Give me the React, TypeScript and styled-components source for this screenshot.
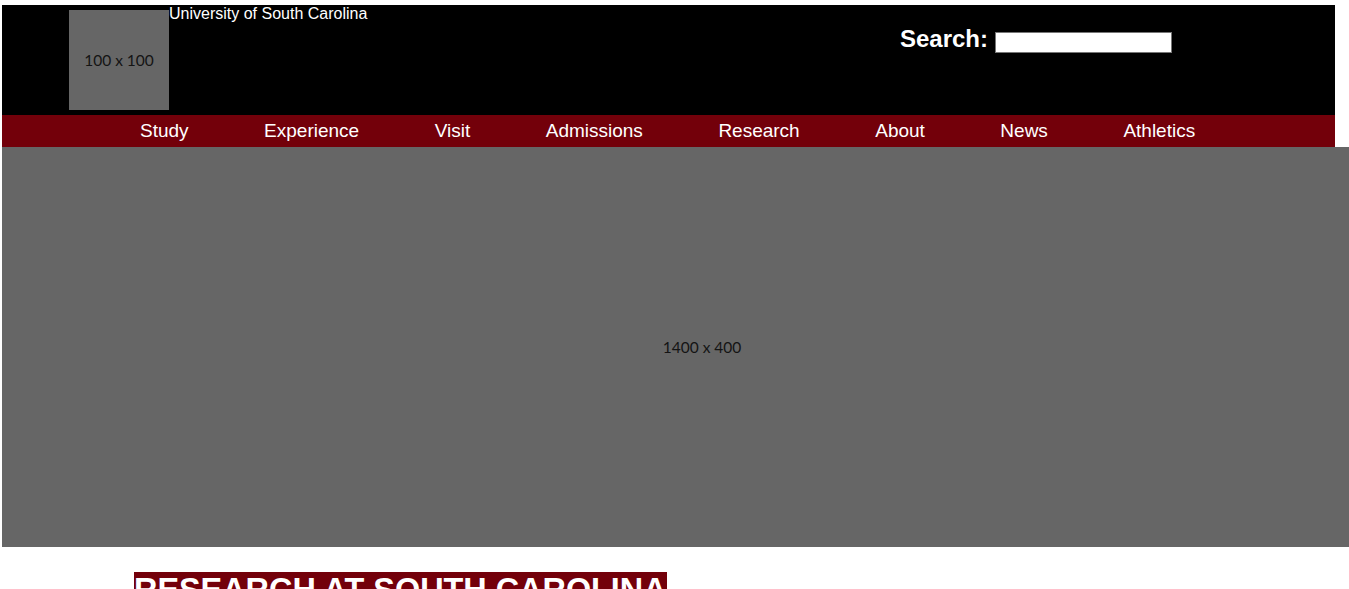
import React from "react";
import styled, { createGlobalStyle } from "styled-components";

const GlobalStyle = createGlobalStyle`
  html { overflow-x: hidden; }
  body {
    margin: 0;
    font-family: "Liberation Sans", Arial, sans-serif;
    background: #ffffff;
  }
`;

const Page = styled.div`
  padding: 5px 0 0 2px;
  min-height: 900px;
`;

const Header = styled.header`
  display: flex;
  align-items: flex-start;
  width: 1333px;
  height: 110px;
  background: #000000;
  color: #ffffff;
`;

const Placeholder = styled.div<{ $w: number; $h: number }>`
  display: flex;
  align-items: center;
  justify-content: center;
  flex: none;
  width: ${(p) => p.$w}px;
  height: ${(p) => p.$h}px;
  background: #666666;
  color: #141414;
  font-family: Lato, "Noto Sans", sans-serif;
  font-size: 15.5px;
`;

const Logo = styled(Placeholder)`
  margin: 5px 0 0 67px;
`;

const SiteTitle = styled.div`
  font-size: 16px;
  line-height: 18px;
  color: #ffffff;
`;

const Search = styled.form`
  display: flex;
  align-items: flex-start;
  margin-left: auto;
  margin-right: 163px;
`;

const SearchLabel = styled.label`
  margin-top: 20px;
  font-size: 24px;
  font-weight: bold;
  line-height: 28px;
  color: #ffffff;
`;

const SearchInput = styled.input`
  box-sizing: border-box;
  margin: 27px 0 0 7px;
  width: 177px;
  height: 21px;
  padding: 0 2px;
  border: 1px solid #767676;
  background: #ffffff;
  font-family: "Liberation Sans", Arial, sans-serif;
  font-size: 13px;
`;

const Nav = styled.nav`
  display: flex;
  align-items: center;
  gap: 75.5px;
  box-sizing: border-box;
  width: 1333px;
  height: 32px;
  padding-left: 138px;
  background: #73000a;
`;

const NavLink = styled.a`
  color: #ffffff;
  font-size: 19px;
  line-height: 22px;
  text-decoration: none;
`;

const Hero = styled(Placeholder)``;

const Content = styled.section`
  padding: 25px 0 0 132px;
`;

const Heading = styled.h1`
  display: inline-block;
  margin: 0;
  background: #73000a;
  color: #ffffff;
  font-size: 32.4px;
  font-weight: bold;
  line-height: 37px;
  text-transform: uppercase;
`;

const links = [
  "Study",
  "Experience",
  "Visit",
  "Admissions",
  "Research",
  "About",
  "News",
  "Athletics",
];

export default function App() {
  return (
    <>
      <GlobalStyle />
      <Page>
        <Header>
          <Logo $w={100} $h={100}>100 x 100</Logo>
          <SiteTitle>University of South Carolina</SiteTitle>
          <Search onSubmit={(e) => e.preventDefault()}>
            <SearchLabel htmlFor="q">Search:</SearchLabel>
            <SearchInput id="q" type="text" />
          </Search>
        </Header>
        <Nav>
          {links.map((l) => (
            <NavLink key={l} href="#">
              {l}
            </NavLink>
          ))}
        </Nav>
        <Hero $w={1400} $h={400}>1400 x 400</Hero>
        <Content>
          <Heading>Research at South Carolina</Heading>
        </Content>
      </Page>
    </>
  );
}
